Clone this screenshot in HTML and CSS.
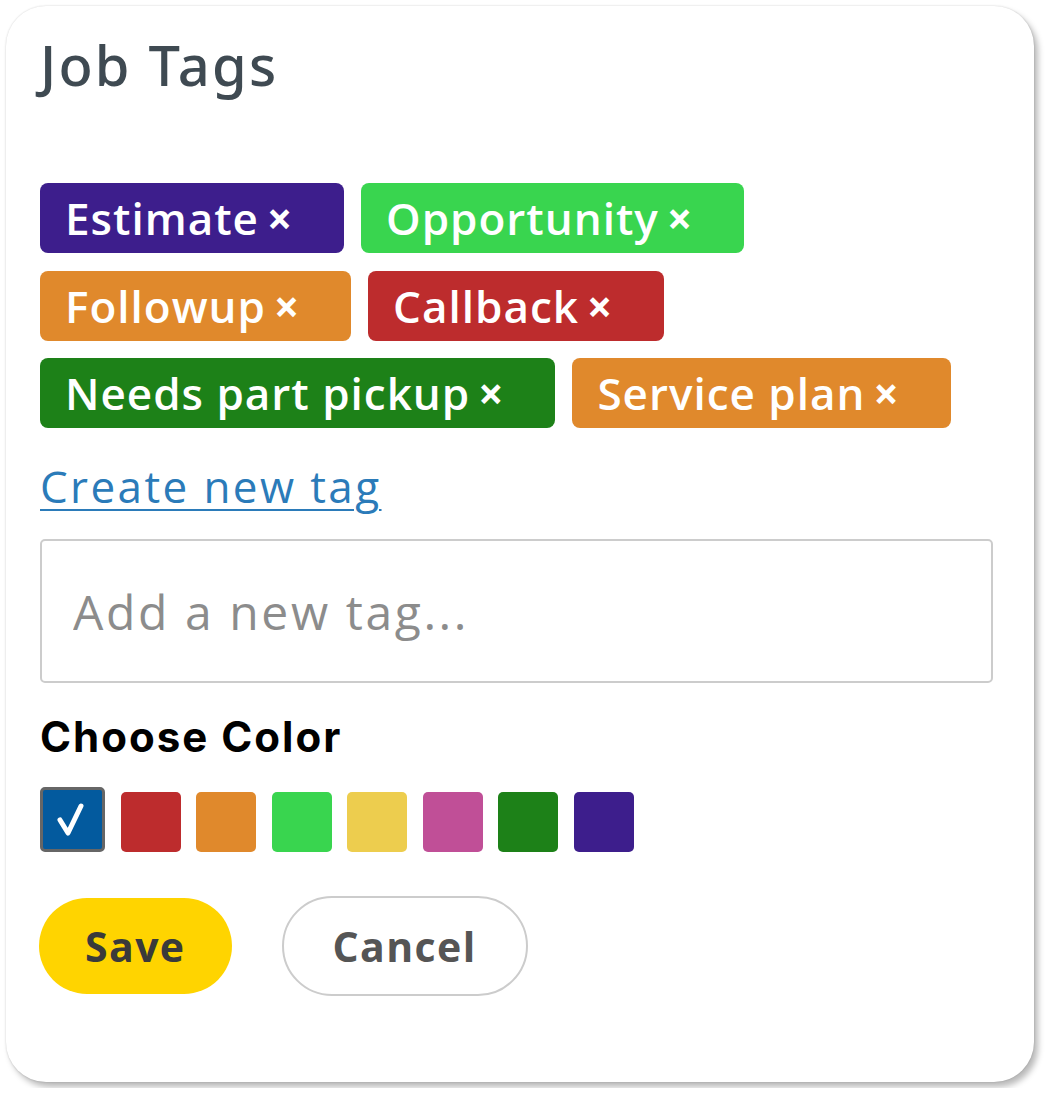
FILE: index.html
```html
<!DOCTYPE html>
<html lang="en">
<head>
    <meta charset="UTF-8">
    <meta name="viewport" content="width=device-width, initial-scale=1.0">
    <title>Job Tags</title>
    <link rel="stylesheet" href="styles.css">
</head>
<body>
    <div class="card">
        <h2 class="title">Job Tags</h2>

        <div class="tags">
            <span class="tag purple">Estimate<span class="remove">×</span></span>
            <span class="tag green">Opportunity<span class="remove">×</span></span>
            <span class="tag orange">Followup<span class="remove">×</span></span>
            <span class="tag red">Callback<span class="remove">×</span></span>
            <span class="tag dark-green">Needs part pickup<span class="remove">×</span></span>
            <span class="tag orange">Service plan<span class="remove">×</span></span>
        </div>

        <a href="#" class="create-link">Create new tag</a>

        <input type="text" class="tag-input" placeholder="Add a new tag...">

        <div class="color-label">Choose Color</div>
        <div class="swatches">
            <span class="swatch selected blue">
                <svg width="59" height="59" viewBox="0 0 59 59">
                    <path d="M17 30 L25 43 L38 16" fill="none" stroke="#fff" stroke-width="5" stroke-linecap="round" stroke-linejoin="round"/>
                </svg>
            </span>
            <span class="swatch red"></span>
            <span class="swatch orange"></span>
            <span class="swatch green"></span>
            <span class="swatch yellow"></span>
            <span class="swatch pink"></span>
            <span class="swatch dark-green"></span>
            <span class="swatch purple"></span>
        </div>

        <div class="actions">
            <button type="button" class="btn save">Save</button>
            <button type="button" class="btn cancel">Cancel</button>
        </div>
    </div>
</body>
</html>
```
FILE: styles.css
```css
body {
    margin: 0;
    background-color: #ffffff;
    font-family: "Open Sans", sans-serif;
}
.card {
    box-sizing: border-box;
    width: 1028px;
    height: 1076px;
    margin: 6px;
    padding: 30px 41px 0 34px;
    background: white;
    border-radius: 40px;
    box-shadow: 0 0 2px rgba(0,0,0,0.18), 4px 5px 6px rgba(0,0,0,0.28);
}
.title {
    margin: 0;
    font-family: "Noto Sans", sans-serif;
    font-size: 56px;
    line-height: 56px;
    font-weight: 500;
    letter-spacing: 2.2px;
    color: #3f4a52;
}
.tags {
    display: flex;
    flex-wrap: wrap;
    gap: 17.5px 17px;
    margin-top: 91px;
}
.tag {
    display: inline-flex;
    align-items: center;
    height: 70px;
    padding: 0 52px 0 25px;
    border-radius: 8px;
    color: white;
    font-size: 44px;
    font-weight: 600;
    letter-spacing: 1px;
    line-height: 70px;
}
.remove {
    margin-left: 8px;
    font-weight: 700;
    font-size: 44px;
    letter-spacing: 0;
}
.purple { background-color: #3d1e8c; }
.green { background-color: #39d54f; }
.orange { background-color: #e0892c; }
.red { background-color: #bd2c2d; }
.dark-green { background-color: #1d8118; }
.yellow { background-color: #edcd4e; }
.pink { background-color: #c04f97; }
.blue { background-color: #035a9e; }

.create-link {
    display: inline-block;
    margin-top: 36px;
    font-size: 44px;
    line-height: 44px;
    letter-spacing: 2.4px;
    color: #2b7bb9;
    text-decoration: underline;
    text-decoration-thickness: 2px;
    text-underline-offset: 6px;
}
.tag-input {
    display: block;
    box-sizing: border-box;
    width: 953px;
    height: 144px;
    margin-top: 31px;
    padding: 0 0 0 31px;
    border: 2px solid #cccccc;
    border-radius: 5px;
    font-family: "Open Sans", sans-serif;
    font-size: 48px;
    letter-spacing: 2.6px;
    color: #333;
}
.tag-input::placeholder {
    color: #8c8c8c;
}
.color-label {
    margin-top: 33px;
    font-family: Inter, sans-serif;
    font-size: 42px;
    line-height: 42px;
    font-weight: 700;
    letter-spacing: 2px;
    color: #000;
}
.swatches {
    display: flex;
    align-items: flex-end;
    gap: 15.5px;
    margin-top: 29px;
}
.swatch {
    display: block;
    width: 60px;
    height: 60px;
    border-radius: 5px;
}
.swatch.selected {
    box-sizing: border-box;
    width: 65px;
    height: 65px;
    border: 3px solid #666666;
}
.swatch svg {
    display: block;
}
.actions {
    display: flex;
    align-items: center;
    gap: 50px;
    margin-top: 44px;
}
.btn {
    box-sizing: border-box;
    padding: 0 46px;
    border-radius: 50px;
    font-family: "Open Sans", sans-serif;
    font-size: 41px;
    font-weight: 700;
    letter-spacing: 1.4px;
    cursor: pointer;
}
.save {
    height: 96px;
    margin-left: -1px;
    border: none;
    background-color: #ffd400;
    color: #3a3a3a;
}
.cancel {
    height: 100px;
    padding: 0 49px;
    border: 2px solid #cccccc;
    background-color: white;
    color: #555555;
}
```
